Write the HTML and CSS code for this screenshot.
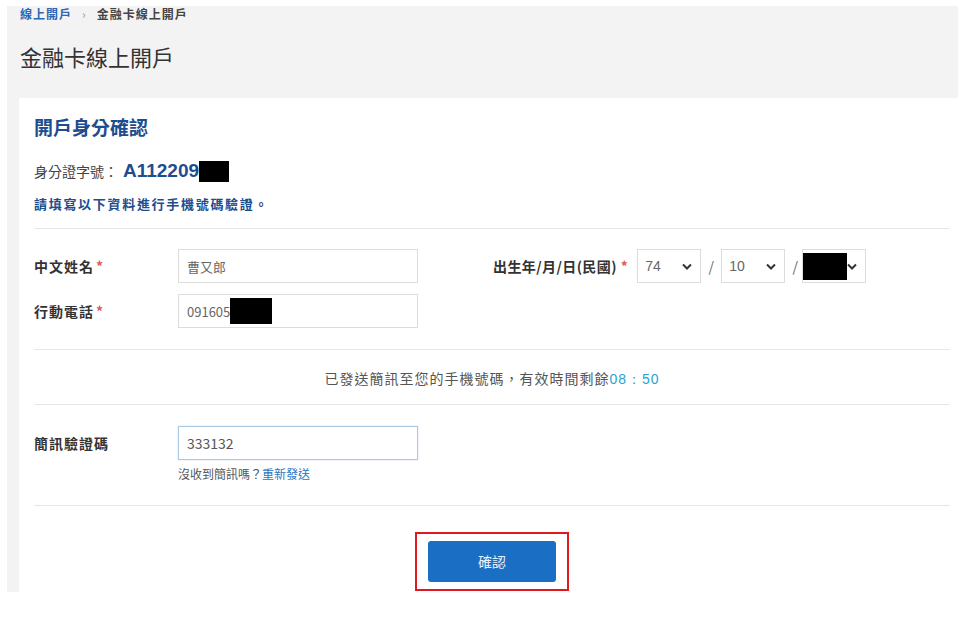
FILE: index.html
```html
<!DOCTYPE html>
<html>
	<head>
		<meta charset="UTF-8">
		<title>金融卡線上開戶</title>
		<link rel="stylesheet" href="styles.css">
	</head>
	<body>
		<div class="page">
			<div class="top">
				<div class="crumb">
					<a href="javascript:;">線上開戶</a>
					<span class="sep">›</span>
					<span>金融卡線上開戶</span>
				</div>
				<h1>金融卡線上開戶</h1>
			</div>
			<div class="card">
				<h2>開戶身分確認</h2>
				<div class="id_row">
					<span class="id_label">身分證字號：</span><span class="id_val">A112209</span><span class="mask id_mask"></span>
				</div>
				<p class="notice">請填寫以下資料進行手機號碼驗證。</p>

				<div class="sec form">
					<div class="row">
						<label class="lbl">中文姓名<i>*</i></label>
						<div class="ipt">曹又郎</div>
						<label class="lbl birth">出生年/月/日(民國)<i>*</i></label>
						<div class="sel"><span>74</span><svg viewBox="0 0 10 6"><path d="M1 1l4 4 4-4" /></svg></div>
						<span class="slash">/</span>
						<div class="sel"><span>10</span><svg viewBox="0 0 10 6"><path d="M1 1l4 4 4-4" /></svg></div>
						<span class="slash">/</span>
						<div class="sel day"><span class="mask day_mask"></span><svg viewBox="0 0 10 6"><path d="M1 1l4 4 4-4" /></svg></div>
					</div>
					<div class="row">
						<label class="lbl">行動電話<i>*</i></label>
						<div class="ipt">091605<span class="mask tel_mask"></span></div>
					</div>
				</div>

				<div class="sec timer">
					已發送簡訊至您的手機號碼，有效時間剩餘<span class="time">08：50</span>
				</div>

				<div class="sec code">
					<div class="row">
						<label class="lbl">簡訊驗證碼</label>
						<div class="ipt focus">333132</div>
					</div>
					<p class="resend">沒收到簡訊嗎？<a href="javascript:;">重新發送</a></p>
				</div>

				<div class="btn_area">
					<span class="mark"><a href="javascript:;" class="btn">確認</a></span>
				</div>
			</div>
		</div>
	</body>
</html>
```

FILE: styles.css
```css
body,
h1,
h2,
p {
    margin: 0;
    padding: 0;
}

body {
    background: #fff;
    font-family: "Noto Sans CJK TC", "Liberation Sans", sans-serif;
    color: #333;
}

a {
    text-decoration: none;
}

.page {
    width: 951px;
    height: 586px;
    margin: 6px 0 0 7px;
    background: #f3f3f3;
    display: flex;
    flex-direction: column;
}

.top {
    height: 92px;
    padding-left: 13px;
    box-sizing: border-box;
}

.crumb {
    font-size: 12px;
    line-height: 16px;
    font-weight: bold;
    color: #444;
    letter-spacing: 1px;
    display: flex;
    gap: 10px;
}

.crumb a {
    color: #2b67b3;
}

.crumb .sep {
    color: #999;
    font-weight: normal;
}

.top h1 {
    font-size: 22px;
    line-height: 28px;
    font-weight: normal;
    color: #333;
    margin-top: 20px;
}

.card {
    flex: 1;
    margin-left: 12px;
    background: #fff;
    padding: 17px 8px 0 15px;
    overflow: hidden;
}

.card h2 {
    font-size: 19px;
    line-height: 24px;
    color: #1d4d8e;
    font-weight: bold;
}

.id_row {
    margin-top: 20px;
    height: 24px;
    display: flex;
    align-items: center;
}

.id_label {
    font-size: 14px;
    color: #444;
    margin-right: 5px;
}

.id_val {
    font: bold 19px "Liberation Sans", sans-serif;
    color: #1d4d8e;
}

.mask {
    display: inline-block;
    background: #000;
}

.id_mask {
    width: 30px;
    height: 21px;
}

.notice {
    margin-top: 12px;
    font-size: 13px;
    line-height: 18px;
    font-weight: bold;
    color: #1d4d8e;
    letter-spacing: 1.7px;
}

.sec {
    border-top: 1px solid #e6e6e6;
}

.form {
    margin-top: 15px;
    padding: 20px 0 21px;
    display: flex;
    flex-direction: column;
    gap: 11px;
}

.row {
    display: flex;
    align-items: center;
}

.lbl {
    width: 144px;
    font-size: 14px;
    font-weight: bold;
    color: #333;
    letter-spacing: 1px;
}

.lbl i {
    font-style: normal;
    color: #e05a5a;
    margin-left: 2px;
}

.ipt {
    width: 240px;
    height: 34px;
    border: 1px solid #dcdcdc;
    box-sizing: border-box;
    padding-left: 8px;
    display: flex;
    align-items: center;
    font-size: 13px;
    color: #666;
}

.tel_mask {
    width: 42px;
    height: 26px;
}

.lbl.birth {
    width: auto;
    letter-spacing: 0.4px;
    margin-left: 75px;
    margin-right: 9px;
}

.lbl.birth i {
    margin-left: 4px;
}

.sel {
    width: 64px;
    height: 34px;
    border: 1px solid #dcdcdc;
    box-sizing: border-box;
    display: flex;
    align-items: center;
    justify-content: space-between;
    padding: 0 8px 0 7px;
    font: 14px "Liberation Sans", sans-serif;
    color: #666;
}

.sel svg {
    width: 10px;
    height: 7px;
    fill: none;
    stroke: #333;
    stroke-width: 2;
}

.sel.day {
    padding-left: 0;
    margin-left: -3px;
}

.day_mask {
    width: 44px;
    height: 27px;
}

.slash {
    width: 20px;
    text-align: center;
    color: #666;
    font-size: 14px;
}

.timer {
    padding: 18px 0 15px;
    text-align: center;
    font-size: 14px;
    line-height: 20px;
    color: #555;
    letter-spacing: 1px;
}

.timer .time {
    color: #2aa3d4;
    font-family: "Liberation Sans", sans-serif;
}

.code {
    padding: 21px 0 23px;
}

.ipt.focus {
    border-color: #a9c8e2;
    box-shadow: 0 0 2px #cfe2f1;
    font-size: 14px;
    color: #555;
}

.resend {
    margin: 6px 0 0 144px;
    font-size: 12px;
    line-height: 16px;
    color: #555;
}

.resend a {
    color: #2b74c0;
}

.btn_area {
    border-top: 1px solid #e6e6e6;
    padding-top: 26px;
    display: flex;
    justify-content: center;
}

.mark {
    border: 2px solid #e0191f;
    padding: 7px 11px;
    display: block;
}

.btn {
    display: block;
    width: 128px;
    height: 41px;
    line-height: 41px;
    text-align: center;
    background: #1a6fc4;
    border-radius: 3px;
    color: #e8f0fb;
    font-size: 14px;
}
```
